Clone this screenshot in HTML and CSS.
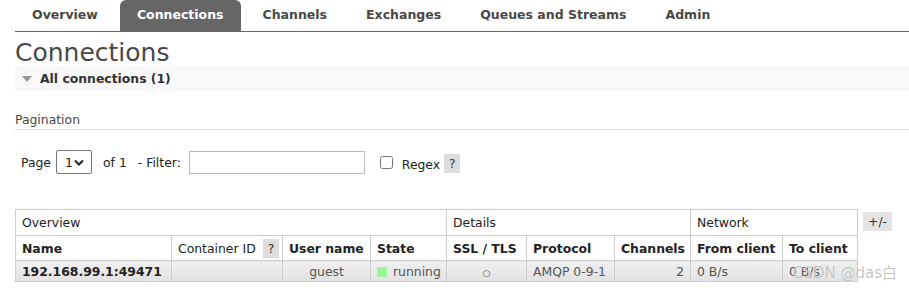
FILE: index.html
```html
<!DOCTYPE html>
<html lang="en">
<head>
  <meta charset="UTF-8">
  <meta name="viewport" content="width=device-width, initial-scale=1.0">
  <link rel="stylesheet" href="styles.css">
  <title>RabbitMQ Management: Connections</title>
</head>
<body>
<div class="page">
  <ul class="menu">
    <li><a>Overview</a></li>
    <li class="selected"><a>Connections</a></li>
    <li><a>Channels</a></li>
    <li><a>Exchanges</a></li>
    <li><a>Queues and Streams</a></li>
    <li><a>Admin</a></li>
  </ul>

  <h1>Connections</h1>
  <div class="section-title"><span class="arrow"></span>All connections (1)</div>

  <h3 class="pagination-title">Pagination</h3>
  <div class="pagination">
    <span>Page</span>
    <span class="page-select">1
      <svg width="10" height="7" viewBox="0 0 10 7"><path d="M1 1.5 L5 5.5 L9 1.5" fill="none" stroke="#222" stroke-width="2"/></svg>
    </span>
    <span class="of">of 1</span>
    <span class="filter-label">- Filter:</span>
    <input class="filter" type="text">
    <input class="regex-box" type="checkbox">
    <span class="regex">Regex</span>
    <span class="help">?</span>
  </div>

  <div class="list-wrap">
    <table class="list">
      <colgroup>
        <col style="width:156px"><col style="width:111px"><col style="width:88px"><col style="width:76px">
        <col style="width:80px"><col style="width:88px"><col style="width:76px">
        <col style="width:92px"><col style="width:75px">
      </colgroup>
      <tr class="group">
        <th colspan="4">Overview</th>
        <th colspan="3">Details</th>
        <th colspan="2">Network</th>
      </tr>
      <tr class="heads">
        <th>Name</th>
        <th class="plain">Container ID <span class="help">?</span></th>
        <th>User name</th>
        <th>State</th>
        <th>SSL / TLS</th>
        <th>Protocol</th>
        <th>Channels</th>
        <th>From client</th>
        <th>To client</th>
      </tr>
      <tr class="row">
        <td class="name">192.168.99.1:49471</td>
        <td></td>
        <td class="c">guest</td>
        <td><span class="status"></span>running</td>
        <td class="c"><span class="ssl">○</span></td>
        <td>AMQP 0-9-1</td>
        <td class="r">2</td>
        <td>0 B/s</td>
        <td>0 B/s</td>
      </tr>
    </table>
    <span class="toggle">+/-</span>
  </div>

  <div class="watermark">CSDN @das白</div>
</div>
</body>
</html>
```

FILE: styles.css
```css
* {
  box-sizing: border-box;
}
body {
  margin: 0;
  font-family: "DejaVu Sans", Verdana, sans-serif;
  font-size: 12.4px;
  color: #484848;
}
.page {
  padding-left: 15px;
  position: relative;
  height: 293px;
  overflow: hidden;
}

.menu {
  display: flex;
  margin: 0;
  padding: 0;
  list-style: none;
  border-bottom: 1px solid #666;
}
.menu li {
  margin-right: 5px;
}
.menu a {
  display: block;
  height: 31px;
  line-height: 30px;
  padding: 0 17px;
  font-size: 12.5px;
  font-weight: bold;
  color: #484848;
  border-radius: 6px 6px 0 0;
}
.menu .selected a {
  background: #666;
  color: #fff;
}

h1 {
  margin: 8px 0 0;
  font-size: 25px;
  line-height: 26px;
  font-weight: normal;
  color: #484848;
}

.section-title {
  display: flex;
  align-items: center;
  height: 25px;
  padding-left: 7px;
  background: #f8f8f8;
  font-weight: bold;
  color: #333;
}
.arrow {
  width: 0;
  height: 0;
  margin-right: 8px;
  border-left: 5.5px solid transparent;
  border-right: 5.5px solid transparent;
  border-top: 6px solid #999;
}

.pagination-title {
  margin: 20px 0 0;
  padding-bottom: 0;
  font-size: 12.4px;
  line-height: 18px;
  font-weight: normal;
  border-bottom: 1px solid #ddd;
}

.pagination {
  display: flex;
  align-items: center;
  height: 24px;
  margin-top: 20px;
  padding-left: 6px;
  color: #222;
}
.page-select {
  display: flex;
  align-items: center;
  justify-content: space-between;
  width: 36px;
  height: 24px;
  margin-left: 5px;
  padding: 0 7px 0 8px;
  border: 1px solid #767676;
  border-radius: 2px;
}
.of {
  margin-left: 11px;
}
.filter-label {
  margin-left: 11px;
}
.filter {
  width: 176px;
  height: 23px;
  margin: 0 0 0 8px;
  border: 1px solid #bbb;
}
.regex-box {
  width: 13px;
  height: 13px;
  margin: 0 0 0 15px;
}
.regex {
  margin: 4px 0 0 9px;
}
.help {
  display: inline-block;
  height: 19px;
  line-height: 19px;
  padding: 0 4px;
  margin-left: 4px;
  background: #ddd;
  color: #333;
  font-weight: normal;
}
.pagination .help {
  margin-top: 3px;
  padding: 0 4px 0 5px;
}

.list-wrap {
  display: flex;
  align-items: flex-start;
  margin-top: 35px;
}
.list {
  table-layout: fixed;
  width: 842px;
  border-collapse: collapse;
}
.list th,
.list td {
  border: 1px solid #ccc;
  padding: 0 6px;
  text-align: left;
  white-space: nowrap;
}
.list .group th {
  height: 26px;
  font-weight: normal;
  color: #222;
}
.list .heads th {
  height: 25px;
  font-weight: bold;
  color: #222;
}
.list .heads th.plain {
  font-weight: normal;
}
.list .heads .help {
  margin-left: 3px;
  padding: 0 5px;
}
.list .row td {
  height: 21px;
  background: linear-gradient(#f0f0f0, #e2e2e2);
  color: #555;
}
.list td.name {
  font-weight: bold;
  color: #222;
}
.list td.c {
  text-align: center;
}
.list td.r {
  text-align: right;
}
.ssl {
  font-size: 9px;
}
.status {
  display: inline-block;
  width: 10px;
  height: 10px;
  margin-right: 6px;
  vertical-align: -1px;
  background: #98f898;
}
.toggle {
  height: 19px;
  line-height: 19px;
  margin: 3px 0 0 5px;
  padding: 0 5px;
  background: #e4e4e4;
  color: #333;
}

.watermark {
  position: absolute;
  left: 793px;
  top: 261px;
  font-family: "DejaVu Sans", "Noto Sans CJK SC", sans-serif;
  font-size: 15px;
  color: rgba(140, 140, 140, 0.5);
  text-shadow: 0 0 1px #fff;
}
```
